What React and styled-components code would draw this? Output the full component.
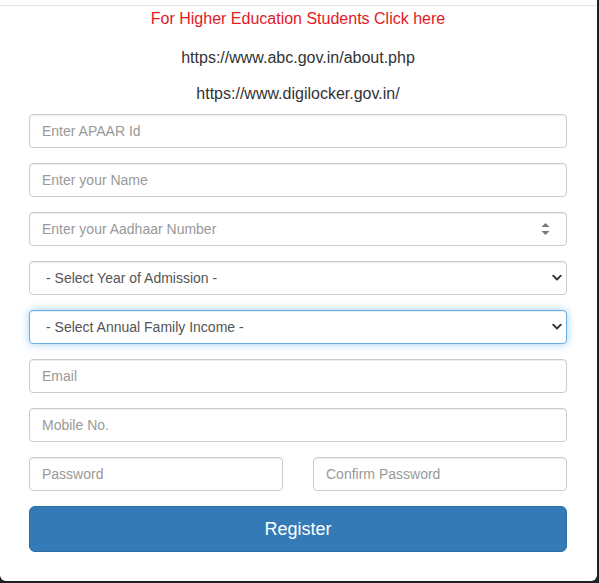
import React from "react";
import styled, { createGlobalStyle } from "styled-components";

const Global = createGlobalStyle`
  html, body { margin: 0; padding: 0; }
  body {
    background: #1d2024;
    font-family: "Liberation Sans", Arial, Helvetica, sans-serif;
    width: 599px;
    height: 583px;
    overflow: hidden;
  }
  * { box-sizing: border-box; }
`;

const TopStrip = styled.div`
  height: 6px;
  background: #fff;
  border-bottom: 1px solid #e5e5e5;
  width: 597px;
`;

const Panel = styled.div`
  width: 597px;
  height: 575px;
  background: #fff;
  border-radius: 0 0 6px 6px;
  padding: 3px 30px 0 29px;
  display: flex;
  flex-direction: column;
`;

const Notice = styled.a`
  display: block;
  text-align: center;
  color: #e3191f;
  font-size: 16px;
  line-height: 20px;
  text-decoration: none;
  cursor: pointer;
`;

const LinkLine = styled.p`
  margin: ${(p) => p.$top}px 0 0;
  text-align: center;
  color: #333;
  font-size: 16px;
  line-height: 20px;
`;

const Form = styled.form`
  margin-top: 10px;
  display: flex;
  flex-direction: column;
  gap: 15px;
`;

const Field = styled.input`
  display: block;
  width: 100%;
  height: 34px;
  padding: 6px 12px;
  font-family: inherit;
  font-size: 14px;
  color: #555;
  background: #fff;
  border: 1px solid #ccc;
  border-radius: 4px;
  box-shadow: inset 0 1px 1px rgba(0, 0, 0, 0.075);
  outline: none;
  &::placeholder { color: #999; }
  &::-webkit-inner-spin-button,
  &::-webkit-outer-spin-button { -webkit-appearance: none; margin: 0; }
  -moz-appearance: textfield;
`;

const Wrap = styled.div`
  position: relative;
`;

const Select = styled.select`
  display: block;
  width: 100%;
  height: 34px;
  padding: 6px 30px 6px 16px;
  font-family: inherit;
  font-size: 14px;
  color: #555;
  background: #fff;
  border: 1px solid ${(p) => (p.$focus ? "#66afe9" : "#ccc")};
  border-radius: 4px;
  box-shadow: ${(p) =>
    p.$focus
      ? "inset 0 1px 1px rgba(0,0,0,.075), 0 0 8px rgba(102,175,233,.6)"
      : "inset 0 1px 1px rgba(0, 0, 0, 0.075)"};
  appearance: none;
  -webkit-appearance: none;
  outline: none;
`;

const Overlay = styled.svg`
  position: absolute;
  top: 50%;
  right: ${(p) => p.$right}px;
  transform: translateY(-50%);
  pointer-events: none;
`;

const Row = styled.div`
  display: grid;
  grid-template-columns: 1fr 1fr;
  column-gap: 30px;
`;

const Button = styled.button`
  display: block;
  width: 100%;
  height: 46px;
  padding: 10px 16px;
  font-family: inherit;
  font-size: 18px;
  line-height: 24px;
  color: #fff;
  background: #337ab7;
  border: 1px solid #2e6da4;
  border-radius: 6px;
  cursor: pointer;
`;

const Chevron = () => (
  <Overlay $right={5} width="10" height="7" viewBox="0 0 10 7">
    <path d="M1.2 1.2 L5 5 L8.8 1.2" fill="none" stroke="#333" strokeWidth="1.9" strokeLinecap="round" strokeLinejoin="round" />
  </Overlay>
);

const Spinner = () => (
  <Overlay $right={17} width="9" height="13" viewBox="0 0 9 13">
    <path d="M0.5 4.5 L4.5 0.5 L8.5 4.5 Z" fill="#777" />
    <path d="M0.5 8.5 L4.5 12.5 L8.5 8.5 Z" fill="#777" />
  </Overlay>
);

export default function App() {
  return (
    <>
      <Global />
      <TopStrip />
      <Panel>
        <Notice>For Higher Education Students Click here</Notice>
        <LinkLine $top={19}>https://www.abc.gov.in/about.php</LinkLine>
        <LinkLine $top={16}>https://www.digilocker.gov.in/</LinkLine>
        <Form onSubmit={(e) => e.preventDefault()}>
          <Field type="text" placeholder="Enter APAAR Id" />
          <Field type="text" placeholder="Enter your Name" />
          <Wrap>
            <Field type="number" placeholder="Enter your Aadhaar Number" />
            <Spinner />
          </Wrap>
          <Wrap>
            <Select defaultValue="">
              <option value="">- Select Year of Admission -</option>
            </Select>
            <Chevron />
          </Wrap>
          <Wrap>
            <Select $focus defaultValue="">
              <option value="">- Select Annual Family Income -</option>
            </Select>
            <Chevron />
          </Wrap>
          <Field type="email" placeholder="Email" />
          <Field type="text" placeholder="Mobile No." />
          <Row>
            <Field type="password" placeholder="Password" />
            <Field type="password" placeholder="Confirm Password" />
          </Row>
          <Button type="submit">Register</Button>
        </Form>
      </Panel>
    </>
  );
}
